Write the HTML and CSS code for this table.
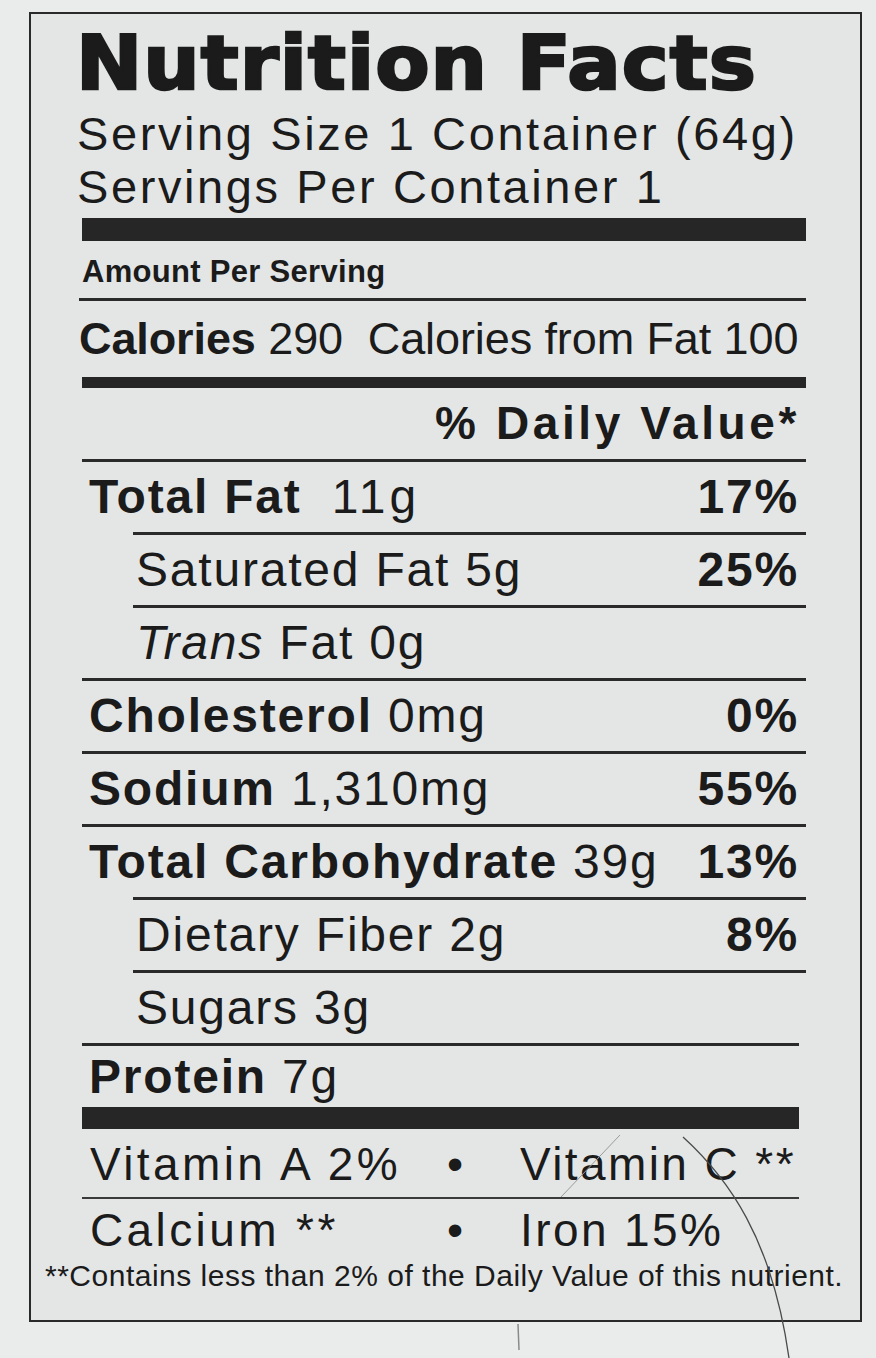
FILE: index.html
```html
<!DOCTYPE html>
<html lang="en">
<head>
<meta charset="utf-8">
<title>Nutrition Facts</title>
<link rel="stylesheet" href="styles.css">
</head>
<body>
<div class="label">
  <h1 class="title">Nutrition Facts</h1>
  <div class="serving">Serving Size 1 Container (64g)</div>
  <div class="serving">Servings Per Container 1</div>
  <div class="bar bar-thick"></div>
  <div class="amount">Amount Per Serving</div>
  <div class="calories"><b>Calories</b> 290&nbsp;&nbsp;Calories from Fat 100</div>
  <div class="bar bar-mid"></div>
  <div class="dv-head">% Daily Value*</div>

  <div class="row"><span><b>Total Fat</b><span class="wide">11g</span></span><b>17%</b></div>
  <div class="row sub"><span>Saturated Fat 5g</span><b>25%</b></div>
  <div class="row sub"><span><i>Trans</i> Fat 0g</span></div>
  <div class="row"><span><b>Cholesterol</b> 0mg</span><b>0%</b></div>
  <div class="row"><span><b>Sodium</b> 1,310mg</span><b>55%</b></div>
  <div class="row"><span><b>Total Carbohydrate</b> 39g</span><b>13%</b></div>
  <div class="row sub"><span>Dietary Fiber 2g</span><b>8%</b></div>
  <div class="row sub"><span>Sugars 3g</span></div>
  <div class="row protein"><span><b>Protein</b> 7g</span></div>

  <div class="bar bar-low"></div>
  <div class="vits first">
    <span>Vitamin A 2%</span><span class="dot">•</span><span class="v3">Vitamin C **</span>
  </div>
  <div class="vits second">
    <span>Calcium **</span><span class="dot">•</span><span class="v3">Iron 15%</span>
  </div>
  <div class="foot">**Contains less than 2% of the Daily Value of this nutrient.</div>
</div>
<svg class="crack" width="876" height="1358" viewBox="0 0 876 1358" aria-hidden="true">
  <path d="M683 1137 C 728 1178, 772 1238, 789 1358" fill="none" stroke="#4a4a4a" stroke-width="1.3"/>
  <path d="M620 1135 L 561 1197" fill="none" stroke="#9a9a9a" stroke-width="1"/>
  <path d="M518 1324 L 519 1350" fill="none" stroke="#8a8a8a" stroke-width="1.5"/>
</svg>
</body>
</html>
```

FILE: styles.css
```css
html, body {
  margin: 0;
  padding: 0;
}

body {
  width: 876px;
  height: 1358px;
  overflow: hidden;
  position: relative;
  background: #eaebeb;
  color: #1b1b1b;
  font-family: "Liberation Sans", Arial, sans-serif;
}

.label {
  box-sizing: border-box;
  width: 833px;
  margin: 12px 0 0 29px;
  padding: 9px 54px 30px 51px;
  border: 2px solid #2a2a2a;
  background: #e4e6e6;
}

.title {
  margin: 0 0 4px -6px;
  font-family: "DejaVu Sans", "Liberation Sans", sans-serif;
  font-weight: bold;
  font-size: 74px;
  line-height: 80px;
  letter-spacing: 1px;
  -webkit-text-stroke: 2.5px #1b1b1b;
  white-space: nowrap;
  transform: scaleX(1.07);
  transform-origin: left center;
}

.serving {
  margin-left: -5px;
  font-size: 47px;
  line-height: 53px;
  letter-spacing: 2.6px;
  white-space: nowrap;
}

.bar {
  background: #262626;
}

.bar-thick {
  margin-top: 5px;
  height: 23px;
}

.bar-mid {
  height: 11px;
}

.bar-low {
  height: 22px;
  margin-right: 7px;
}

.amount {
  padding-top: 4px;
  font-size: 31px;
  line-height: 53px;
  font-weight: bold;
  letter-spacing: 0.3px;
}

.calories {
  border-top: 3px solid #2a2a2a;
  margin-left: -3px;
  font-size: 45px;
  line-height: 76px;
  letter-spacing: -0.1px;
  white-space: nowrap;
}

.dv-head {
  font-size: 46px;
  line-height: 71px;
  font-weight: bold;
  text-align: right;
  padding-right: 6px;
  letter-spacing: 3.6px;
}

.row {
  display: flex;
  justify-content: space-between;
  border-top: 3px solid #2a2a2a;
  padding: 0 7px;
  font-size: 48px;
  line-height: 70px;
  letter-spacing: 1.8px;
  white-space: nowrap;
}

.row b {
  font-weight: bold;
}

.row i {
  font-style: italic;
}

.row.sub {
  margin-left: 51px;
  padding-left: 3px;
}

.wide {
  margin-left: 30px;
  letter-spacing: 4px;
}

.row.protein {
  line-height: 61px;
  margin-right: 7px;
}

.vits {
  display: grid;
  grid-template-columns: 330px 70px 1fr;
  margin-right: 7px;
  padding-left: 8px;
  font-size: 46px;
  letter-spacing: 3.4px;
  white-space: nowrap;
}

.vits.first {
  padding-top: 2px;
  line-height: 66px;
}

.vits.second {
  border-top: 2px solid #3a3a3a;
  line-height: 62px;
}

.dot {
  text-align: center;
  letter-spacing: 0;
}

.v3 {
  padding-left: 30px;
  letter-spacing: 2.4px;
}

.foot {
  margin-left: -37px;
  width: 800px;
  font-size: 30px;
  line-height: 29px;
  letter-spacing: 0.5px;
  white-space: nowrap;
}

.crack {
  position: absolute;
  top: 0;
  left: 0;
  pointer-events: none;
}
```
